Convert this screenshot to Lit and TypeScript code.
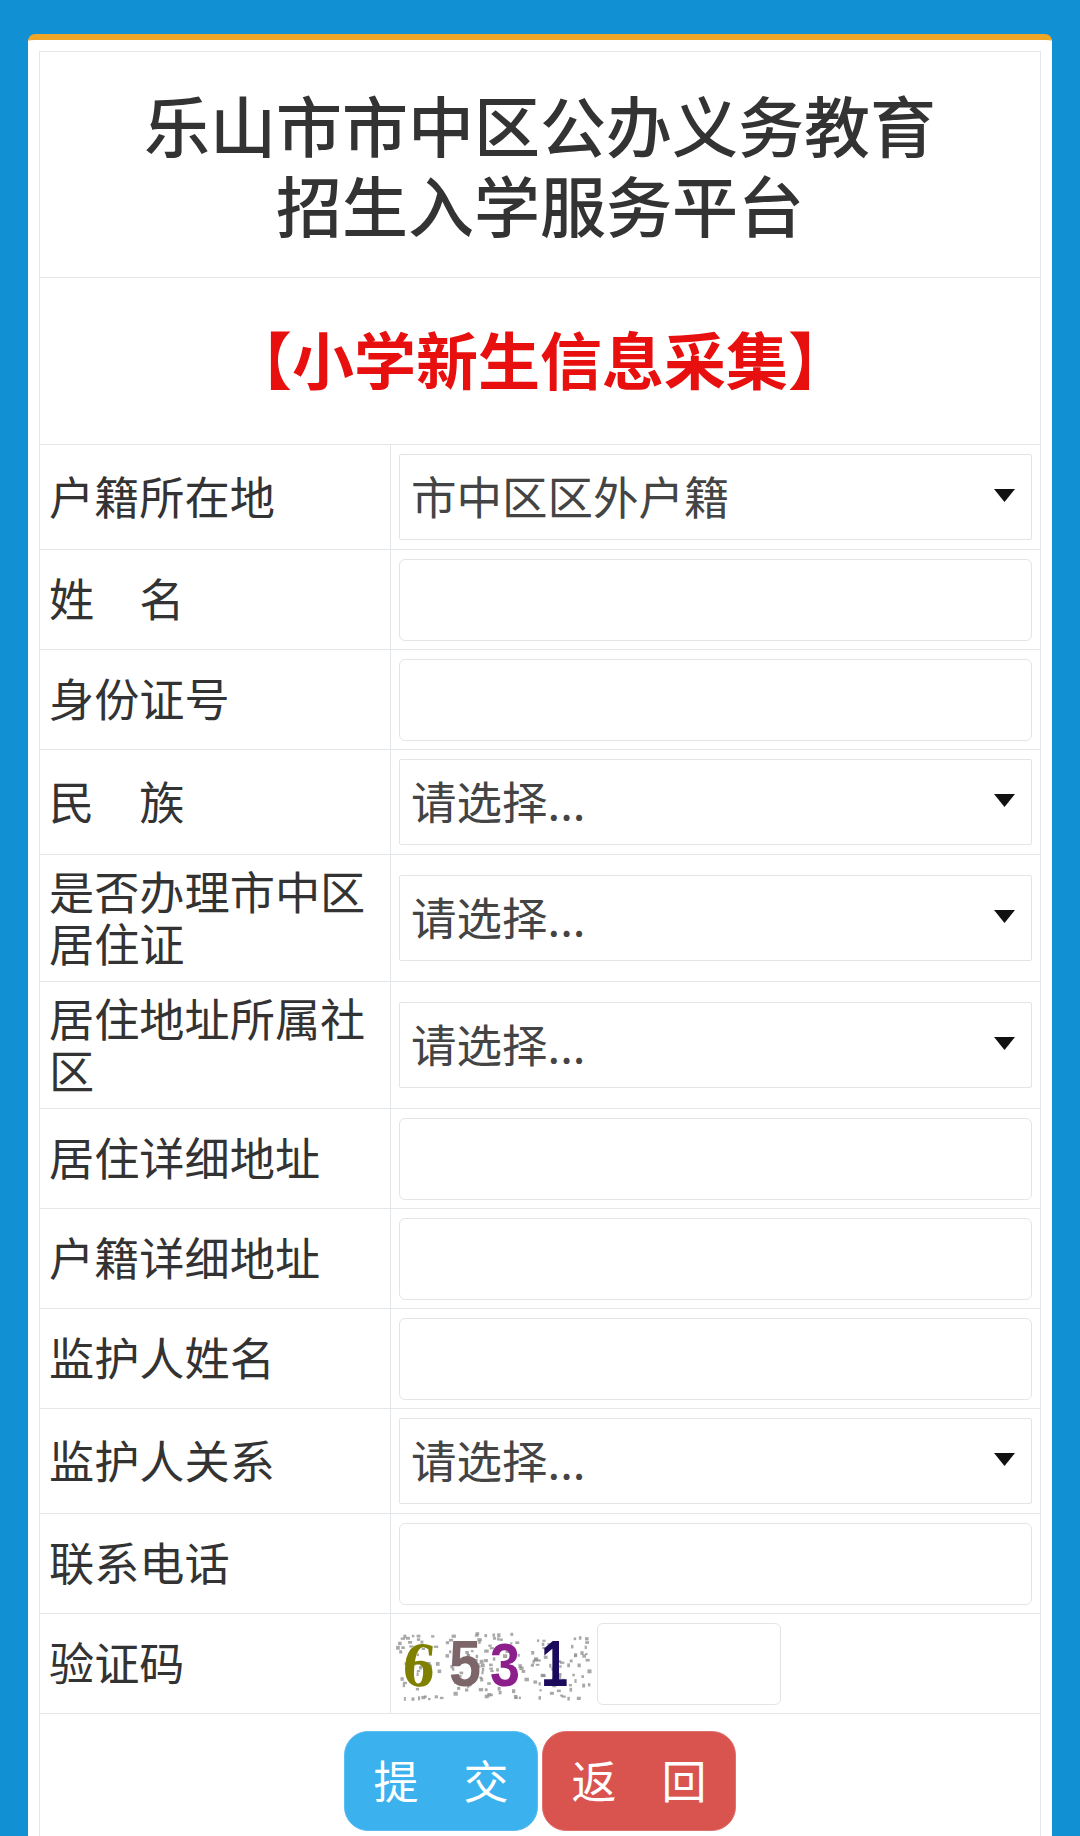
import { LitElement, html, css, svg } from "lit";
import { customElement } from "lit/decorators.js";

type Row = { label: string; kind: "select" | "input" | "captcha"; value?: string; h: string };

const ROWS: Row[] = [
  { label: "户籍所在地", kind: "select", value: "市中区区外户籍", h: "h105" },
  { label: "姓　名", kind: "input", h: "h100" },
  { label: "身份证号", kind: "input", h: "h100" },
  { label: "民　族", kind: "select", value: "请选择...", h: "h105" },
  { label: "是否办理市中区居住证", kind: "select", value: "请选择...", h: "h127" },
  { label: "居住地址所属社区", kind: "select", value: "请选择...", h: "h127" },
  { label: "居住详细地址", kind: "input", h: "h100" },
  { label: "户籍详细地址", kind: "input", h: "h100" },
  { label: "监护人姓名", kind: "input", h: "h100" },
  { label: "监护人关系", kind: "select", value: "请选择...", h: "h105" },
  { label: "联系电话", kind: "input", h: "h100" },
  { label: "验证码", kind: "captcha", h: "h100" },
];

function noise() {
  let s = 6531;
  const rnd = () => {
    s = (s * 16807) % 2147483647;
    return s / 2147483647;
  };
  const out = [];
  for (let i = 0; i < 190; i++) {
    const x = 2 + rnd() * 192;
    const y = 6 + rnd() * 66;
    const w = 2 + rnd() * 2.5;
    const h = 2 + rnd() * 2;
    out.push(svg`<rect x=${x.toFixed(1)} y=${y.toFixed(1)} width=${w.toFixed(1)} height=${h.toFixed(1)} fill="#8b8b8b" opacity="0.75"></rect>`);
  }
  return out;
}

@customElement("app-root")
export class AppRoot extends LitElement {
  static styles = css`
    :host {
      display: block;
      height: 1836px;
      overflow: hidden;
      background: #1190d3;
      font-family: "Noto Sans CJK SC", "Liberation Sans", sans-serif;
      color: #333;
    }
    .card {
      margin: 0 28px;
      position: relative;
      top: 34px;
      height: 1802px;
      box-sizing: border-box;
      background: #fff;
      border-top: 6px solid #efa525;
      border-radius: 7px 7px 0 0;
      padding: 11px 11px 0;
    }
    .table {
      border: 1px solid #e4e7e9;
      border-bottom: 0;
      height: 100%;
      box-sizing: border-box;
    }
    .title {
      margin: 0;
      height: 225px;
      box-sizing: border-box;
      padding-top: 31px;
      text-align: center;
      font-size: 66px;
      line-height: 80px;
      font-weight: 500;
      color: #333;
    }
    .sub {
      margin: 0;
      height: 167px;
      box-sizing: border-box;
      border-top: 1px solid #e4e7e9;
      padding-bottom: 6px;
      display: flex;
      align-items: center;
      justify-content: center;
      font-size: 62px;
      font-weight: 700;
      color: #e8100f;
    }
    .row {
      display: grid;
      grid-template-columns: 350px 1fr;
      box-sizing: border-box;
      border-top: 1px solid #e4e7e9;
    }
    .h100 { height: 100px; }
    .h105 { height: 105px; }
    .h127 { height: 127px; }
    .label {
      display: flex;
      align-items: center;
      padding: 0 9px 3px;
      font-size: 45.2px;
      line-height: 52px;
      color: #333;
    }
    .field {
      border-left: 1px solid #e4e7e9;
      padding: 0 8px;
      display: flex;
      align-items: center;
      position: relative;
    }
    select,
    input {
      font-family: inherit;
      box-sizing: border-box;
      width: 100%;
      background: #fff;
      border: 1px solid #e2e5e7;
      color: #444;
      outline: none;
    }
    select {
      appearance: none;
      height: 86px;
      border-radius: 2px;
      font-size: 45.5px;
      padding: 0 50px 4px 11px;
    }
    input {
      height: 82px;
      border-radius: 6px;
    }
    .caret {
      position: absolute;
      right: 25px;
      top: 50%;
      margin-top: -8px;
      width: 21px;
      height: 13px;
    }
    .captcha-field {
      gap: 5px;
      padding-left: 3px;
    }
    .captcha {
      width: 198px;
      height: 76px;
      flex: none;
    }
    .code {
      width: 184px;
      flex: none;
    }
    .actions {
      border-top: 1px solid #e4e7e9;
      display: flex;
      justify-content: center;
      gap: 4px;
      padding-top: 17px;
    }
    button {
      width: 194px;
      height: 100px;
      border-radius: 24px;
      color: #fff;
      font-family: inherit;
      font-size: 45px;
      padding: 0 0 4px;
    }
    .ok { background: #3bb1ee; border: 1px solid #5bbdf0; }
    .back { background: #d9534f; border: 1px solid #e0726e; }
  `;

  private captcha() {
    return html`<svg class="captcha" viewBox="0 0 198 76">
      ${noise()}
      <text x="9" y="60" font-family="Liberation Serif" font-weight="700" font-size="64" fill="#7f7f00" transform="rotate(6 25 40)">6</text>
      <text x="55" y="60" font-family="Liberation Sans" font-weight="700" font-size="64" fill="#7c666a" textLength="32" lengthAdjust="spacingAndGlyphs">5</text>
      <text x="96" y="60" font-family="Liberation Sans" font-weight="700" font-size="62" fill="#8c1f8c" textLength="30" lengthAdjust="spacingAndGlyphs">3</text>
      <text x="147" y="60" font-family="Liberation Sans" font-weight="700" font-size="64" fill="#1c0a5c" textLength="27" lengthAdjust="spacingAndGlyphs">1</text>
    </svg>`;
  }

  private field(r: Row) {
    if (r.kind === "select") {
      return html`<div class="field">
        <select><option>${r.value}</option></select>
        <svg class="caret" viewBox="0 0 21 13"><path d="M0 0H21L10.5 13Z" fill="#111"></path></svg>
      </div>`;
    }
    if (r.kind === "captcha") {
      return html`<div class="field captcha-field">${this.captcha()}<input class="code" type="text" /></div>`;
    }
    return html`<div class="field"><input type="text" /></div>`;
  }

  render() {
    return html`<main class="card">
      <div class="table">
        <h1 class="title">乐山市市中区公办义务教育<br />招生入学服务平台</h1>
        <h2 class="sub">【小学新生信息采集】</h2>
        ${ROWS.map(
          (r) => html`<div class="row ${r.h}">
            <div class="label">${r.label}</div>
            ${this.field(r)}
          </div>`
        )}
        <div class="actions">
          <button class="ok">提　交</button>
          <button class="back">返　回</button>
        </div>
      </div>
    </main>`;
  }
}
